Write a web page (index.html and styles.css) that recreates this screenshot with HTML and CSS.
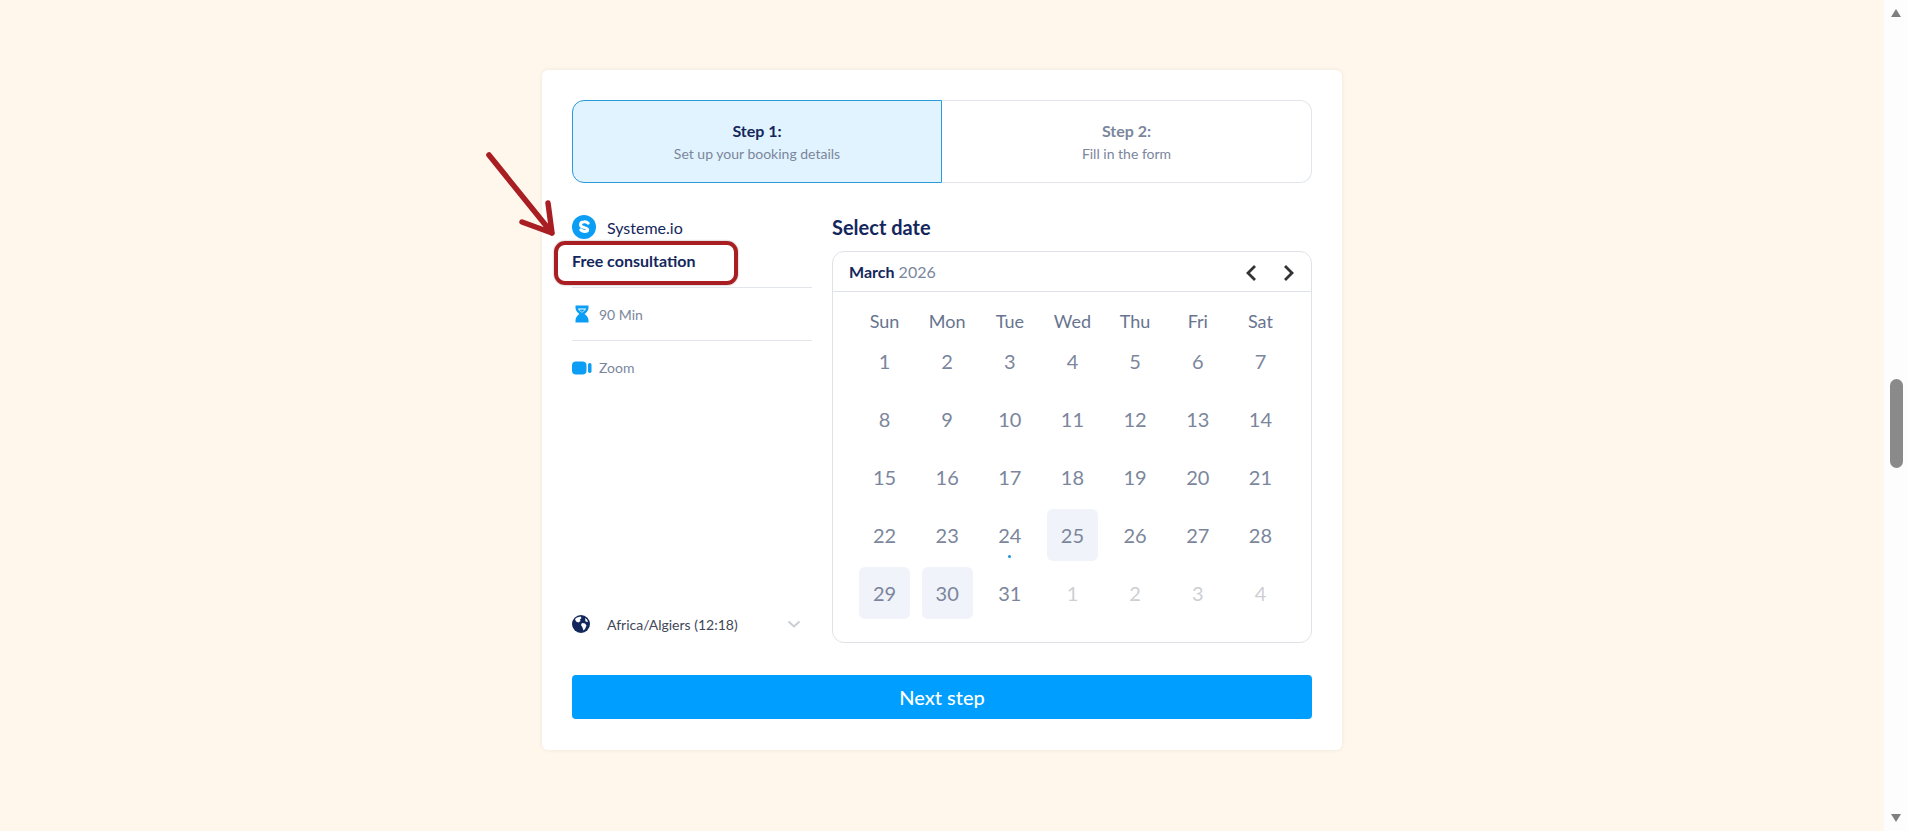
FILE: index.html
```html
<!DOCTYPE html>
<html lang="en">
<head>
  <meta charset="UTF-8">
  <meta name="viewport" content="width=device-width, initial-scale=1.0">
  <title>Free consultation</title>
  <link rel="stylesheet" href="styles.css">
</head>
<body>
  <main class="page">
    <div class="card">
      <!-- Steps -->
      <div class="steps">
        <div class="step active">
          <strong>Step 1:</strong>
          <span>Set up your booking details</span>
        </div>
        <div class="step">
          <strong>Step 2:</strong>
          <span>Fill in the form</span>
        </div>
      </div>

      <div class="booking">
        <!-- Left column -->
        <div class="info">
          <div class="brand">
            <svg class="brand-logo" viewBox="0 0 24 24" width="24" height="24">
              <circle cx="12" cy="12" r="12" fill="#0c9ef5"/>
              <path d="M16.200 8.200C15 6.900 13.400 6.500 11.900 6.700c-2 .2-3.400 1.400-3.400 3 0 3.600 7.200 2.200 7.200 5 0 1-1.200 1.800-3 1.800-1.500 0-2.800-.5-3.900-1.600" fill="none" stroke="#fff" stroke-width="3" stroke-linecap="round"/>
            </svg>
            <span>Systeme.io</span>
          </div>
          <h2 class="event-name">Free consultation</h2>
          <div class="meta meta-line">
            <svg viewBox="0 0 20 20" width="20" height="20">
              <path d="M3.500 1.500h13v2.500c0 2.600-2.200 4.700-4 6 1.800 1.300 4 3.400 4 6v2.500h-13V16c0-2.600 2.200-4.700 4-6-1.800-1.300-4-3.400-4-6z" fill="#0c9ef5"/>
              <path d="M6 4.500h8c-.4 1.500-2.500 3.300-4 4.200-1.500-.9-3.600-2.700-4-4.200z" fill="#fff"/>
              <path d="M7.200 5.500h5.600c-.6.900-1.800 1.900-2.800 2.500-1-.6-2.200-1.600-2.800-2.500z" fill="#0c9ef5"/>
            </svg>
            <span>90 Min</span>
          </div>
          <div class="meta">
            <svg viewBox="0 0 20 20" width="20" height="20">
              <rect x="0" y="3.500" width="14.500" height="13" rx="4" fill="#0c9ef5"/>
              <rect x="16" y="5" width="3.500" height="10" rx="1.700" fill="#0c9ef5"/>
            </svg>
            <span>Zoom</span>
          </div>
          <div class="timezone">
            <svg viewBox="0 0 18 18" width="18" height="18">
              <circle cx="9" cy="9" r="9" fill="#14275c"/>
              <path d="M5 2.500l3.500-1 1 1.500-1.500 1.500.5 1.500-2 1.500-2.500-1-1-2.500zM10 8l3 .5 1.500 2-1.500 3.500-1.500 1.500-1-3-1.500-2.500zM13 3l2 1.500 1 2.500-2.500-.5z" fill="#fff"/>
            </svg>
            <span>Africa/Algiers (12:18)</span>
            <svg class="tz-chevron" viewBox="0 0 14 8" width="14" height="8">
              <path d="M1.500 1.500L7 6.500l5.500-5" fill="none" stroke="#c9cdd4" stroke-width="2"/>
            </svg>
          </div>
        </div>

        <!-- Calendar -->
        <div class="date-col">
          <h2 class="date-title">Select date</h2>
          <div class="calendar">
            <div class="cal-head">
              <div class="cal-month"><strong>March</strong> 2026</div>
              <div class="cal-nav">
                <svg viewBox="0 0 12 18" width="12" height="18"><path d="M10 2L3 9l7 7" fill="none" stroke="#333" stroke-width="2.800"/></svg>
                <svg viewBox="0 0 12 18" width="12" height="18"><path d="M2 2l7 7-7 7" fill="none" stroke="#333" stroke-width="2.800"/></svg>
              </div>
            </div>
            <div class="cal-grid">
              <div class="dow">Sun</div><div class="dow">Mon</div><div class="dow">Tue</div><div class="dow">Wed</div><div class="dow">Thu</div><div class="dow">Fri</div><div class="dow">Sat</div>
              <div class="day">1</div><div class="day">2</div><div class="day">3</div><div class="day">4</div><div class="day">5</div><div class="day">6</div><div class="day">7</div>
              <div class="day">8</div><div class="day">9</div><div class="day">10</div><div class="day">11</div><div class="day">12</div><div class="day">13</div><div class="day">14</div>
              <div class="day">15</div><div class="day">16</div><div class="day">17</div><div class="day">18</div><div class="day">19</div><div class="day">20</div><div class="day">21</div>
              <div class="day">22</div><div class="day">23</div><div class="day today">24</div><div class="day open">25</div><div class="day">26</div><div class="day">27</div><div class="day">28</div>
              <div class="day open">29</div><div class="day open">30</div><div class="day">31</div><div class="day off">1</div><div class="day off">2</div><div class="day off">3</div><div class="day off">4</div>
            </div>
          </div>
        </div>
      </div>

      <button class="next-btn">Next step</button>

      <!-- Annotation drawn over the screenshot -->
      <div class="mark-box"></div>
      <svg class="mark-arrow" viewBox="0 0 80 90" width="80" height="90">
        <path d="M5 5L68 83M64 53L68 83L38 72" fill="none" stroke="#a81e22" stroke-width="5.500" stroke-linecap="round" stroke-linejoin="round"/>
      </svg>
    </div>
  </main>

  <!-- Browser scrollbar -->
  <aside class="scrollbar">
    <div class="sb-arrow up"></div>
    <div class="sb-thumb"></div>
    <div class="sb-arrow down"></div>
  </aside>
</body>
</html>
```

FILE: styles.css
```css
* {
  box-sizing: border-box;
}
body {
  margin: 0;
  height: 831px;
  overflow: hidden;
  display: flex;
  font-family: 'Lato', sans-serif;
  background: #fff6ec;
  color: #14275c;
}
.page {
  flex: 1;
  padding-top: 70px;
}
.card {
  position: relative;
  width: 800px;
  height: 680px;
  margin: 0 auto;
  padding: 30px;
  background: #fff;
  border-radius: 6px;
  box-shadow: 0 0 4px rgba(0, 0, 0, 0.08);
}
/* Steps */
.steps {
  display: flex;
  height: 83px;
}
.step {
  flex: 1;
  display: flex;
  flex-direction: column;
  align-items: center;
  justify-content: center;
  gap: 5px;
  border: 1px solid #e2e6ea;
  border-left: none;
  border-radius: 0 12px 12px 0;
  font-size: 14px;
  color: #7b869c;
}
.step strong {
  font-size: 16px;
  font-weight: 700;
}
.step.active {
  flex: 0 0 370px;
  background: #e1f3fe;
  border: 1px solid #2a9ad8;
  border-radius: 12px 0 0 12px;
}
.step.active strong {
  color: #14275c;
}
/* Main area */
.booking {
  display: flex;
  gap: 20px;
  margin-top: 32px;
}
.info {
  width: 240px;
  height: 428px;
  display: flex;
  flex-direction: column;
}
.brand {
  display: flex;
  align-items: center;
  gap: 11px;
  height: 24px;
  font-size: 16px;
  color: #14275c;
}
.event-name {
  margin: 0;
  height: 49px;
  padding: 11px 0 0;
  font-size: 16px;
  line-height: 22px;
  font-weight: 700;
  border-bottom: 1px solid #e2e6ea;
}
.meta {
  display: flex;
  align-items: center;
  gap: 7px;
  height: 53px;
  font-size: 14px;
  color: #7b869c;
}
.meta-line {
  border-bottom: 1px solid #e2e6ea;
}
.timezone {
  margin-top: auto;
  display: flex;
  align-items: center;
  gap: 17px;
  height: 38px;
  font-size: 14px;
  color: #3f4859;
}
.tz-chevron {
  margin-left: auto;
  margin-right: 11px;
}
/* Calendar */
.date-col {
  flex: 1;
}
.date-title {
  margin: 0 0 11px;
  font-size: 20px;
  line-height: 25px;
  font-weight: 700;
}
.calendar {
  height: 392px;
  border: 1px solid #dfe3e8;
  border-radius: 12px;
}
.cal-head {
  display: flex;
  align-items: center;
  justify-content: space-between;
  height: 40px;
  padding: 0 16px;
  border-bottom: 1px solid #dfe3e8;
}
.cal-month {
  font-size: 16px;
  color: #7b869c;
}
.cal-month strong {
  color: #14275c;
}
.cal-nav {
  display: flex;
  gap: 26px;
  margin-top: 2px;
}
.cal-grid {
  display: grid;
  grid-template-columns: repeat(7, 51px);
  grid-template-rows: 22px;
  grid-auto-rows: 52px;
  column-gap: 11.67px;
  row-gap: 6px;
  padding: 15px 25px 0 26px;
}
.dow {
  height: 22px;
  text-align: center;
  font-size: 18px;
  line-height: 28px;
  color: #68748f;
}
.day {
  position: relative;
  display: flex;
  align-items: center;
  justify-content: center;
  font-size: 20px;
  color: #7b869c;
  border-radius: 6px;
}
.day.open {
  background: #f0f3f9;
}
.day.off {
  color: #cdcfd3;
}
.day.today::after {
  content: "";
  position: absolute;
  left: 24px;
  bottom: 3px;
  width: 3px;
  height: 3px;
  border-radius: 50%;
  background: #1c94d8;
}
.next-btn {
  display: block;
  width: 100%;
  height: 44px;
  margin-top: 32px;
  border: none;
  border-radius: 4px;
  background: #009efe;
  color: #fff;
  font-family: inherit;
  font-size: 20px;
  font-weight: 500;
}
/* Red annotation */
.mark-box {
  position: absolute;
  left: 12px;
  top: 171px;
  width: 184px;
  height: 44px;
  border: 4px solid #a81e22;
  border-radius: 11px;
  box-shadow: 0 0 2px rgba(0, 0, 0, 0.4);
}
.mark-arrow {
  position: absolute;
  left: -58px;
  top: 80px;
}
/* Scrollbar */
.scrollbar {
  position: relative;
  flex: 0 0 24px;
  background: #fdfdfd;
}
.sb-thumb {
  position: absolute;
  left: 6px;
  top: 379px;
  width: 13px;
  height: 89px;
  border-radius: 7px;
  background: #8a8a8a;
}
.sb-arrow {
  position: absolute;
  left: 7px;
  width: 0;
  height: 0;
  border-left: 5.5px solid transparent;
  border-right: 5.5px solid transparent;
}
.sb-arrow.up {
  top: 9px;
  border-bottom: 8px solid #808080;
}
.sb-arrow.down {
  bottom: 9px;
  border-top: 8px solid #808080;
}
```
